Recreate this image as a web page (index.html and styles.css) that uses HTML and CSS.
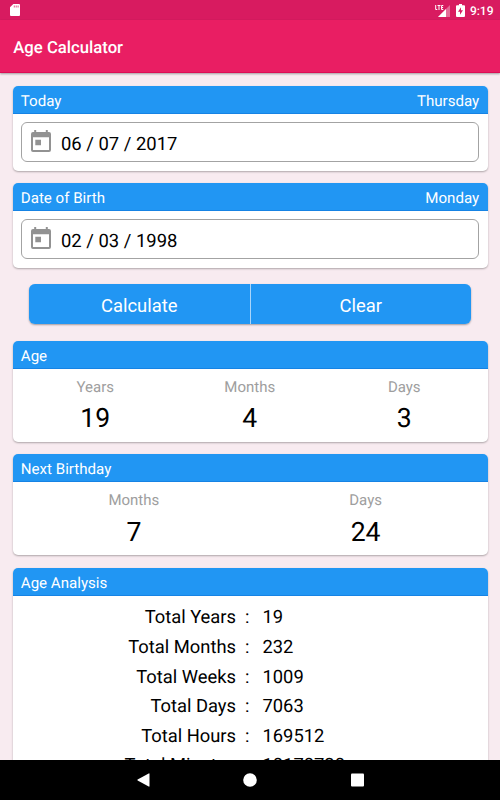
FILE: index.html
```
<!DOCTYPE html>
<html lang="en">
<head>
<meta charset="utf-8">
<title>Age Calculator</title>
<link rel="stylesheet" href="styles.css">
</head>
<body>
<div class="screen">
  <div class="status">
    <svg class="sd" width="10" height="12" viewBox="0 0 10 12"><path fill="#fff" d="M3.3 0H9a1 1 0 0 1 1 1v10a1 1 0 0 1-1 1H1a1 1 0 0 1-1-1V3.3z"/><path fill="#d81b60" opacity=".75" d="M3.8 1.4h1v2.2h-1zM5.7 1.4h1v2.2h-1zM7.6 1.4h1v2.2h-1z"/></svg>
    <div class="status-right">
      <svg class="signal" width="16" height="13" viewBox="0 0 16 13"><path fill="#fff" opacity=".35" d="M15 1v12H3z"/><path fill="#fff" d="M11 5v8H3z"/><path fill="none" stroke="#fff" stroke-width="1" d="M.7 1v4.500h1.600M2.500 1.500h3M4 1.500V6M8.300 1.500H6.600v4h1.700M6.600 3.500h1.500"/></svg>
      <svg class="battery" width="9" height="13" viewBox="0 0 9 13"><path fill="#fff" d="M3 0h3v1.200h2a1 1 0 0 1 1 1V12a1 1 0 0 1-1 1H1a1 1 0 0 1-1-1V2.200a1 1 0 0 1 1-1h2z"/><path fill="#d81b60" d="M5 3.200 2 7.700h2v3.100L7 6.300H5z"/></svg>
      <span class="clock">9:19</span>
    </div>
  </div>
  <header class="appbar"><h1>Age Calculator</h1></header>
  <main class="content">
    <section class="card date-card">
      <div class="card-head"><span>Today</span><span>Thursday</span></div>
      <div class="field">
        <svg class="cal" width="20" height="22" viewBox="0 0 20 22"><path fill="#929292" fill-rule="evenodd" d="M3.200 0h2v2h9.600V0h2v2H18a2 2 0 0 1 2 2v16a2 2 0 0 1-2 2H2a2 2 0 0 1-2-2V4a2 2 0 0 1 2-2h1.200zM2 7.300V20h16V7.300zM4.300 9.800h5.700v5.400H4.300z"/></svg>
        <span>06 / 07 / 2017</span>
      </div>
    </section>
    <section class="card date-card">
      <div class="card-head"><span>Date of Birth</span><span>Monday</span></div>
      <div class="field">
        <svg class="cal" width="20" height="22" viewBox="0 0 20 22"><path fill="#929292" fill-rule="evenodd" d="M3.200 0h2v2h9.600V0h2v2H18a2 2 0 0 1 2 2v16a2 2 0 0 1-2 2H2a2 2 0 0 1-2-2V4a2 2 0 0 1 2-2h1.200zM2 7.300V20h16V7.300zM4.300 9.800h5.700v5.400H4.300z"/></svg>
        <span>02 / 03 / 1998</span>
      </div>
    </section>
    <div class="actions"><button>Calculate</button><button>Clear</button></div>
    <section class="card result">
      <div class="card-head"><span>Age</span></div>
      <div class="stats">
        <div class="stat"><span class="label">Years</span><span class="value">19</span></div>
        <div class="stat"><span class="label">Months</span><span class="value">4</span></div>
        <div class="stat"><span class="label">Days</span><span class="value">3</span></div>
      </div>
    </section>
    <section class="card result">
      <div class="card-head"><span>Next Birthday</span></div>
      <div class="stats">
        <div class="stat"><span class="label">Months</span><span class="value">7</span></div>
        <div class="stat"><span class="label">Days</span><span class="value">24</span></div>
      </div>
    </section>
    <section class="card analysis">
      <div class="card-head"><span>Age Analysis</span></div>
      <div class="totals">
        <span>Total Years</span><span>:</span><span>19</span>
        <span>Total Months</span><span>:</span><span>232</span>
        <span>Total Weeks</span><span>:</span><span>1009</span>
        <span>Total Days</span><span>:</span><span>7063</span>
        <span>Total Hours</span><span>:</span><span>169512</span>
        <span>Total Minutes</span><span>:</span><span>10170720</span>
      </div>
    </section>
  </main>
  <nav class="navbar">
    <svg width="13" height="14" viewBox="0 0 13 14"><path fill="#fff" d="M11.700.4Q12.500 0 12.500 1v12q0 1-.8.6L.6 7.500Q0 7 .6 6.500z"/></svg>
    <svg width="14" height="14" viewBox="0 0 14 14"><circle cx="7" cy="7" r="6.800" fill="#fff"/></svg>
    <svg width="13" height="14" viewBox="0 0 13 14"><rect y=".4" width="13" height="13.200" rx="1" fill="#fff"/></svg>
  </nav>
</div>
</body>
</html>
```
FILE: styles.css
```
* { box-sizing: border-box; }
body { margin: 0; font-family: Roboto, "Liberation Sans", sans-serif; color: #000; text-rendering: geometricPrecision; }
.screen { width: 500px; height: 800px; display: flex; flex-direction: column; overflow: hidden; background: #f8ebf0; }
.status { height: 20px; flex: none; background: #d81b60; display: flex; justify-content: space-between; align-items: flex-start; padding: 4px 6.500px 0 10px; }
.status-right { display: flex; align-items: flex-start; color: #fff; }
.signal { margin-right: 5px; }
.battery { margin-right: 5px; }
.clock { font-size: 12px; line-height: 14px; font-weight: 500; }
.appbar { height: 53px; flex: none; background: #e91e63; color: #fff; padding-left: 13.300px; display: flex; align-items: center; border-bottom: 1px solid #dd0c55; box-shadow: 0 1px 2px rgba(0,0,0,.35); z-index: 1; }
.appbar h1 { margin: 5px 0 0; font-size: 16.700px; font-weight: 500; line-height: 20px; }
.content { flex: 1; min-height: 0; overflow: hidden; padding: 13px 12.500px 0; }
.card { background: #fff; border-radius: 5px; box-shadow: 0 1px 2px rgba(0,0,0,.3); overflow: hidden; }
.card-head { height: 28px; background: #2196f3; border-bottom: 1px solid #1683e4; color: #fff; display: flex; justify-content: space-between; padding: 0 8.300px; font-size: 15.100px; line-height: 30px; }
.date-card { height: 84.500px; margin-bottom: 12.500px; }
.field { margin: 8px 8.500px 0; height: 40px; border: 1px solid #a3a3a3; border-radius: 6px; display: flex; align-items: center; padding-left: 9px; font-size: 18.450px; }
.field span { margin: 3px 0 0 10px; }
.cal { margin-top: -3px; }
.actions { display: flex; gap: 1px; height: 40px; margin: 16.500px 16.500px 17px; border-radius: 6px; overflow: hidden; background: #a9d5fa; box-shadow: 0 1px 2px rgba(0,0,0,.35); }
.actions button { flex: 1; border: 0; padding: 2px 0 0; background: #2196f3; color: #fff; font: 18.400px Roboto, sans-serif; }
.result { height: 101px; margin-bottom: 12.400px; }
.stats { display: flex; padding: 8px 6px 0 5.500px; }
.stat { flex: 1; display: flex; flex-direction: column; align-items: center; }
.label { color: #9e9e9e; font-size: 15px; line-height: 20px; }
.value { font-size: 26.600px; line-height: 32px; margin-top: 6.400px; }
.analysis { height: 240px; }
.totals { display: grid; grid-template-columns: 223.500px 26.500px 1fr; grid-auto-rows: 29.600px; align-items: center; padding-top: 7.300px; font-size: 18.350px; }
.totals span:nth-child(3n+1) { text-align: right; }
.totals span:nth-child(3n+2) { padding-left: 9px; }
.navbar { height: 40px; flex: none; background: #000; display: flex; justify-content: center; align-items: center; gap: 93.500px; }
```
